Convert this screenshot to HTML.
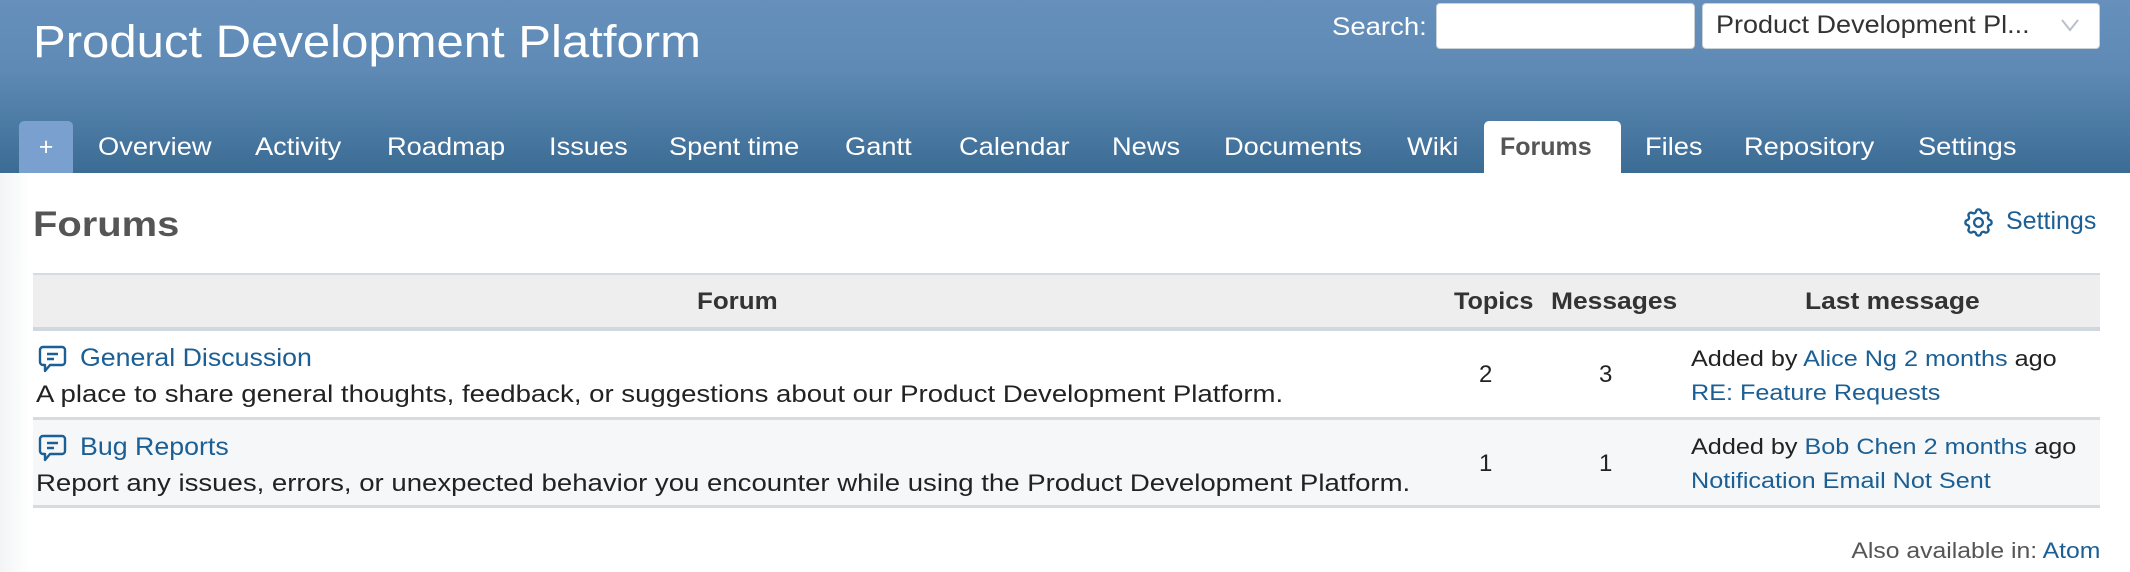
<!DOCTYPE html>
<html><head><meta charset="utf-8"><style>
*{margin:0;padding:0;box-sizing:border-box}
body{width:2130px;height:572px;overflow:hidden;background:#fff;font-family:"Liberation Sans",sans-serif;color:#222;position:relative}
.hdr{position:absolute;left:0;top:0;width:2130px;height:173px;background:linear-gradient(#6690bb,#5e8ab5 40%,#3b6c94)}
.a{position:absolute;white-space:nowrap;transform-origin:left center}
.title{left:33px;top:16px;font-size:45px;color:#fff;transform:scaleX(1.09)}
.tab{top:121px;height:52px;line-height:52px;font-size:25px;color:#fff;transform:scaleX(1.09)}
a,.lk{color:#1b5f94;text-decoration:none}
.input{background:#fff;border:1px solid #c8d0d8;border-radius:4px}
.s12{transform:scaleX(1.12)}
</style></head><body>
<div class="hdr"></div>
<div class="a title">Product Development Platform</div>
<div class="a" style="left:1332px;top:13px;font-size:25px;color:#fff;transform:scaleX(1.1)">Search:</div>
<div class="a input" style="left:1436px;top:3px;width:259px;height:46px"></div>
<div class="a input" style="left:1702px;top:3px;width:398px;height:46px"></div>
<div class="a" style="left:1716px;top:11px;font-size:25px;color:#333;transform:scaleX(1.08)">Product Development Pl...</div>
<svg class="a" style="left:2060px;top:18px" width="20" height="14" viewBox="0 0 20 14" fill="none" stroke="#b8c0cc" stroke-width="2"><path d="M2 2l8 10 8-10"/></svg>
<div class="a" style="left:19px;top:121px;width:54px;height:52px;background:#7aa0d0;border-radius:5px 5px 0 0;color:#fff;font-size:25px;text-align:center;line-height:52px">+</div>
<div class="a" style="left:1484px;top:121px;width:137px;height:52px;background:#fff;border-radius:5px 5px 0 0"></div>
<div class="a tab" style="left:98px">Overview</div>
<div class="a tab" style="left:255px">Activity</div>
<div class="a tab" style="left:387px">Roadmap</div>
<div class="a tab" style="left:549px">Issues</div>
<div class="a tab" style="left:669px">Spent time</div>
<div class="a tab" style="left:845px">Gantt</div>
<div class="a tab" style="left:959px">Calendar</div>
<div class="a tab" style="left:1112px">News</div>
<div class="a tab" style="left:1224px">Documents</div>
<div class="a tab" style="left:1407px">Wiki</div>
<div class="a tab" style="left:1500px;color:#555;font-weight:bold;transform:scaleX(1.0)">Forums</div>
<div class="a tab" style="left:1645px">Files</div>
<div class="a tab" style="left:1744px">Repository</div>
<div class="a tab" style="left:1918px">Settings</div>
<div class="a" style="left:0;top:173px;width:30px;height:399px;background:linear-gradient(90deg,#f2f4f6,#fff)"></div>
<div class="a" style="left:33px;top:205px;font-size:35px;font-weight:bold;color:#555;transform:scaleX(1.14)">Forums</div>
<svg class="a" style="left:1964px;top:208px" width="29" height="29" viewBox="2 2 20 20" fill="none" stroke="#1b5f94" stroke-width="1.6"><path d="M10.3 4.3c.4-1.8 3-1.8 3.4 0a1.7 1.7 0 0 0 2.6 1.1c1.5-.9 3.3.8 2.4 2.4a1.7 1.7 0 0 0 1 2.5c1.8.4 1.8 3 0 3.4a1.7 1.7 0 0 0-1 2.6c.9 1.5-.9 3.3-2.4 2.4a1.7 1.7 0 0 0-2.6 1c-.4 1.8-3 1.8-3.4 0a1.7 1.7 0 0 0-2.6-1c-1.5.9-3.3-.9-2.4-2.4a1.7 1.7 0 0 0-1-2.6c-1.8-.4-1.8-3 0-3.4a1.7 1.7 0 0 0 1-2.5c-.9-1.6.9-3.3 2.4-2.4a1.7 1.7 0 0 0 2.6-1.1z"/><circle cx="12" cy="12" r="3"/></svg>
<div class="a lk" style="left:2006px;top:207px;font-size:25px;transform:scaleX(1.0)">Settings</div>
<div class="a" style="left:33px;top:273px;width:2067px;height:58px;background:#eee;border-top:2px solid #d6dbe0;border-bottom:4px solid #d0d7de"></div>
<div class="a" style="left:33px;top:331px;width:2067px;height:89px;background:#fff;border-bottom:3px solid #d6dbe0"></div>
<div class="a" style="left:33px;top:420px;width:2067px;height:88px;background:#f6f7f9;border-bottom:3px solid #d6dbe0"></div>
<div class="a" style="left:697px;top:288px;font-size:24px;font-weight:bold;color:#333;transform:scaleX(1.08)">Forum</div>
<div class="a" style="left:1454px;top:288px;font-size:24px;font-weight:bold;color:#333;transform:scaleX(1.05)">Topics</div>
<div class="a" style="left:1551px;top:288px;font-size:24px;font-weight:bold;color:#333;transform:scaleX(1.1)">Messages</div>
<div class="a" style="left:1805px;top:288px;font-size:24px;font-weight:bold;color:#333;transform:scaleX(1.1)">Last message</div>
<svg class="a" style="left:38px;top:345px" width="29" height="28" viewBox="0 0 29 28" fill="none" stroke="#1b5f94" stroke-width="2.4" stroke-linejoin="round"><path d="M5 2h19a3 3 0 0 1 3 3v12a3 3 0 0 1-3 3H12l-5 6v-6H5a3 3 0 0 1-3-3V5a3 3 0 0 1 3-3z"/><path d="M9 9h11M9 14h7"/></svg>
<svg class="a" style="left:38px;top:434px" width="29" height="28" viewBox="0 0 29 28" fill="none" stroke="#1b5f94" stroke-width="2.4" stroke-linejoin="round"><path d="M5 2h19a3 3 0 0 1 3 3v12a3 3 0 0 1-3 3H12l-5 6v-6H5a3 3 0 0 1-3-3V5a3 3 0 0 1 3-3z"/><path d="M9 9h11M9 14h7"/></svg>
<div class="a lk" style="left:80px;top:344px;font-size:25px;transform:scaleX(1.07)">General Discussion</div>
<div class="a s12" style="left:36px;top:381px;font-size:24.4px;color:#222;transform:scaleX(1.13)">A place to share general thoughts, feedback, or suggestions about our Product Development Platform.</div>
<div class="a lk" style="left:80px;top:433px;font-size:25px;transform:scaleX(1.07)">Bug Reports</div>
<div class="a" style="left:36px;top:470px;font-size:24.4px;color:#222;transform:scaleX(1.13)">Report any issues, errors, or unexpected behavior you encounter while using the Product Development Platform.</div>
<div class="a" style="left:1479px;top:361px;font-size:24px">2</div>
<div class="a" style="left:1599px;top:361px;font-size:24px">3</div>
<div class="a" style="left:1479px;top:450px;font-size:24px">1</div>
<div class="a" style="left:1599px;top:450px;font-size:24px">1</div>
<div class="a s12" style="left:1691px;top:346px;font-size:22.5px">Added by <span class="lk">Alice Ng</span> <span class="lk">2 months</span> ago</div>
<div class="a lk s12" style="left:1691px;top:380px;font-size:22.5px">RE: Feature Requests</div>
<div class="a s12" style="left:1691px;top:434px;font-size:22.5px">Added by <span class="lk">Bob Chen</span> <span class="lk">2 months</span> ago</div>
<div class="a lk s12" style="left:1691px;top:468px;font-size:22.5px">Notification Email Not Sent</div>
<div class="a" style="right:30px;top:538px;font-size:22.5px;color:#555;transform:scaleX(1.1);transform-origin:right center">Also available in: <span class="lk">Atom</span></div>
</body></html>
